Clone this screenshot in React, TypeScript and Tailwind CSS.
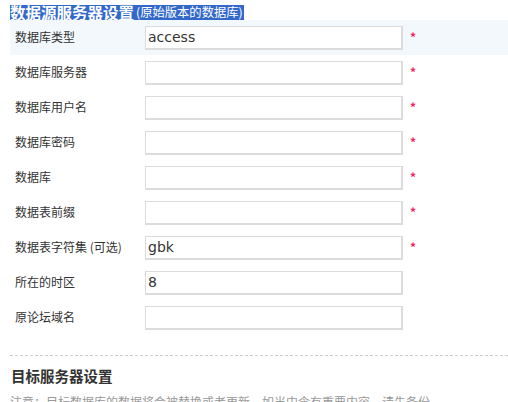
import React from "react";

const rows: { label: React.ReactNode; value: string; req: boolean }[] = [
  { label: "数据库类型", value: "access", req: true },
  { label: "数据库服务器", value: "", req: true },
  { label: "数据库用户名", value: "", req: true },
  { label: "数据库密码", value: "", req: true },
  { label: "数据库", value: "", req: true },
  { label: "数据表前缀", value: "", req: true },
  { label: "数据表字符集 (可选)", value: "gbk", req: true },
  { label: "所在的时区", value: "8", req: false },
  { label: "原论坛域名", value: "", req: false },
];

export default function App() {
  const cjk = { fontFamily: '"Noto Sans CJK SC", "Noto Sans", sans-serif' };
  return (
    <div className="w-[508px] h-[402px] overflow-hidden bg-white pl-[10px]" style={cjk}>
      <div className="h-[20px]">
        <span className="inline-flex items-end bg-[#3268c9] text-white h-[15px] overflow-hidden leading-[15px] pr-[1px]">
          <span className="text-[15.5px] font-bold -mt-[3px] leading-[15px]">数据源服务器设置</span>
          <span className="text-[12.3px] leading-[15px] ml-[2px]">(原始版本的数据库)</span>
        </span>
      </div>
      <div className="flex flex-col">
        {rows.map((r, i) => (
          <div
            key={i}
            className={`flex items-center h-[35px] ${i === 0 ? "bg-[#f2f8fc]" : ""}`}
          >
            <div className="w-[135px] pl-[5px] text-[12px] text-[#333] -mt-[2px]">{r.label}</div>
            <div
              className="w-[258px] h-[24px] bg-white border border-[#dcdcdc] border-b-2 border-r-2 flex items-center pl-[2px] text-[14px] text-[#333]"
              style={{ fontFamily: '"DejaVu Sans", Verdana, sans-serif' }}
            >
              {r.value}
            </div>
            {r.req && (
              <span className="ml-[7px] text-[12px] text-[#f0245a] font-bold leading-none -mt-[2px]">*</span>
            )}
          </div>
        ))}
      </div>
      <div className="mt-[20px] border-t border-dashed border-[#cccccc]" />
      <div className="pt-[11px] text-[14.5px] font-bold text-[#333] leading-[18px] pl-[1px]">目标服务器设置</div>
      <div className="mt-[9px] text-[12px] text-[#999] leading-[16px]">
        注意：目标数据库的数据将会被替换或者更新，如当中含有重要内容，请先备份
      </div>
    </div>
  );
}
